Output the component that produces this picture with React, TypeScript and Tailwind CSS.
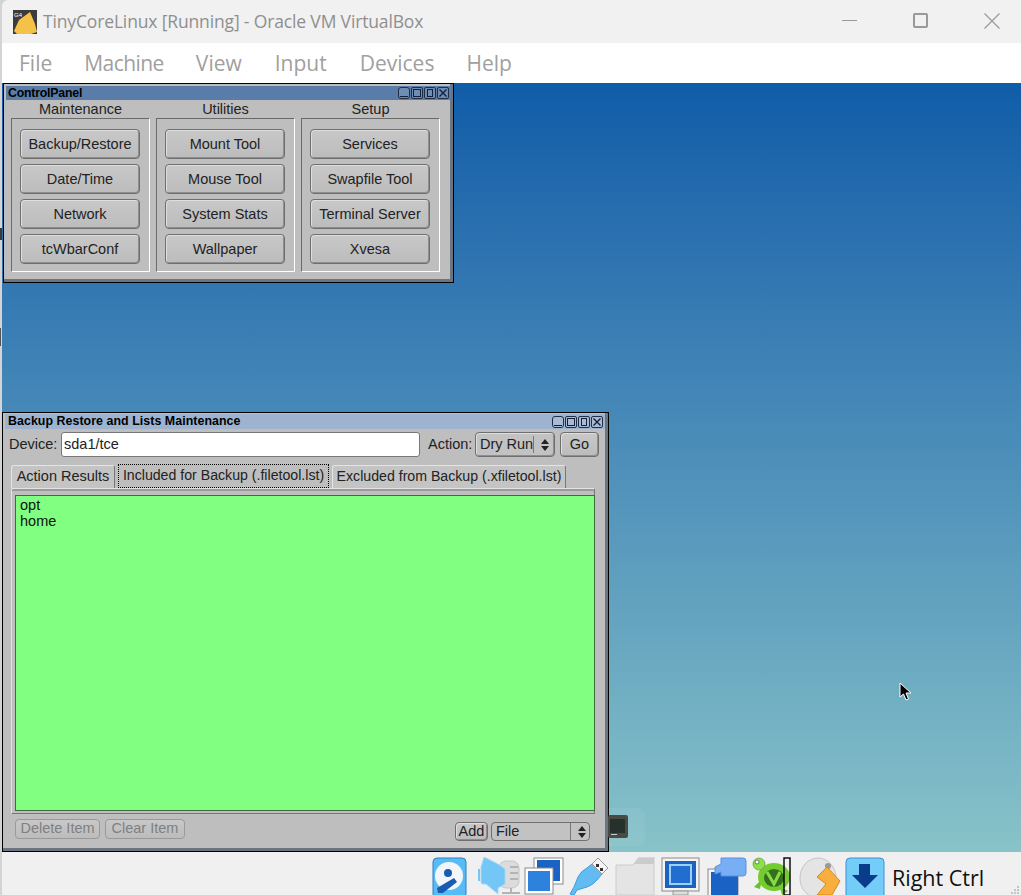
const fltk = "font-['Liberation_Sans',sans-serif]";

function FltkButton({ label, className = "" }: { label: string; className?: string }) {
  return (
    <div
      className={`flex items-center justify-center rounded-[4px] border border-[#6f6f6f] bg-gradient-to-b from-[#c8c8c8] to-[#bcbcbc] text-[#222] shadow-[inset_1px_1px_0_#dedede,inset_-1px_-1px_0_#8e8e8e] ${className}`}
    >
      {label}
    </div>
  );
}

function WinButtons({ light }: { light?: boolean }) {
  const c = light ? "bg-[#a9bbd3]" : "bg-[#6f8db3]";
  return (
    <div className="flex gap-[1px] text-[#14203a]">
      <div className={`flex h-[12px] w-[12px] items-end justify-center rounded-[3px] border border-[#1f2d45] pb-[1px] ${c}`}>
        <div className="h-[1px] w-[8px] bg-[#14203a]" />
      </div>
      <div className={`flex h-[12px] w-[12px] items-center justify-center rounded-[2px] border border-[#1f2d45] ${c}`}>
        <div className="h-[8px] w-[8px] border border-[#14203a]" />
      </div>
      <div className={`flex h-[12px] w-[12px] items-center justify-center rounded-[2px] border border-[#1f2d45] ${c}`}>
        <div className="h-[8px] w-[6px] border border-[#14203a]" />
      </div>
      <div className={`flex h-[12px] w-[12px] items-center justify-center rounded-[2px] border border-[#1f2d45] ${c}`}>
        <svg width="8" height="8" viewBox="0 0 8 8">
          <path d="M0.5 0.5 7.5 7.5M7.5 0.5 0.5 7.5" stroke="#14203a" strokeWidth="1.4" />
        </svg>
      </div>
    </div>
  );
}

function UpDown() {
  return (
    <svg width="8" height="12" viewBox="0 0 8 12">
      <path d="M4 0 8 5H0Z M4 12 0 7H8Z" fill="#222" />
    </svg>
  );
}

const panelGroups = [
  { title: "Maintenance", items: ["Backup/Restore", "Date/Time", "Network", "tcWbarConf"] },
  { title: "Utilities", items: ["Mount Tool", "Mouse Tool", "System Stats", "Wallpaper"] },
  { title: "Setup", items: ["Services", "Swapfile Tool", "Terminal Server", "Xvesa"] },
];

function ControlPanel() {
  return (
    <div className={`absolute left-[1px] top-0 h-[200px] w-[451px] border border-black bg-[#bebebe] pl-[2px] pt-[2px] shadow-[inset_-3px_-3px_0_#6c7480] ${fltk}`}>
      <div className="flex h-[14px] w-[445px] items-center justify-between bg-[#5a7ca8] pl-[2px] pr-[2px]">
        <span className="text-[12.3px] font-bold tracking-[-0.2px] text-black">ControlPanel</span>
        <WinButtons />
      </div>
      <div className="ml-[5px] flex w-[429px] gap-[6px]">
        {panelGroups.map((g) => (
          <div key={g.title} className="w-[139px]">
            <div className="flex h-[18px] items-center justify-center pt-[2px] text-[14.5px] text-[#222]">{g.title}</div>
            <div className="flex h-[154px] flex-col gap-[5px] border border-t-[#6a6a6a] border-l-[#6a6a6a] border-r-white border-b-white pl-[8px] pt-[10px]">
              {g.items.map((item) => (
                <FltkButton key={item} label={item} className="h-[30px] w-[120px] pt-[1px] text-[14.5px]" />
              ))}
            </div>
          </div>
        ))}
      </div>
    </div>
  );
}

function BackupWindow() {
  return (
    <div className={`absolute left-0 top-[329px] h-[440px] w-[607px] border border-black bg-[#bebebe] pl-[2px] pt-[1px] shadow-[inset_-3px_-3px_0_#6c7480] ${fltk}`}>
      <div className="flex h-[15px] w-[600px] items-center justify-between bg-[#9db3d0] pl-[3px] pr-[2px]">
        <span className="text-[12.4px] font-bold tracking-[0.05px] text-black">Backup Restore and Lists Maintenance</span>
        <WinButtons light />
      </div>
      <div className="mt-[3px] flex h-[25px] items-center text-[14.5px] text-[#222]">
        <span className="ml-[4px] w-[52px]">Device:</span>
        <div className="flex h-[25px] w-[359px] items-center rounded-[3px] border border-[#777] bg-white pl-[2px]">sda1/tce</div>
        <span className="ml-[8px] w-[47px]">Action:</span>
        <div className="flex h-[25px] w-[80px] items-center rounded-[4px] border border-[#6f6f6f] bg-[#c2c2c2] pl-[4px] shadow-[inset_1px_1px_0_#dedede,inset_-1px_-1px_0_#8e8e8e]">
          <span className="w-[53px] whitespace-nowrap">Dry Run</span>
          <div className="h-[17px] w-[1px] bg-[#777]" />
          <div className="ml-[7px] flex items-center"><UpDown /></div>
        </div>
        <FltkButton label="Go" className="ml-[5px] h-[25px] w-[39px]" />
      </div>
      <div className="ml-[6px] mt-[7px] flex h-[24px] w-[584px] items-end gap-[3px] text-[14.15px] text-[#222]">
        <div className="flex h-[23px] w-[104px] items-center justify-center rounded-t-[3px] border-r border-t border-l border-r-[#777] border-t-[#e4e4e4] border-l-[#e4e4e4] bg-[#c4c4c4] text-[14.5px]">Action Results</div>
        <div className="flex h-[24px] w-[211px] items-center justify-center border border-dotted border-black bg-[#bebebe]">Included for Backup (.filetool.lst)</div>
        <div className="flex h-[23px] w-[234px] items-center justify-center rounded-t-[3px] border-r border-t border-l border-r-[#777] border-t-[#e4e4e4] border-l-[#e4e4e4] bg-[#c4c4c4]">Excluded from Backup (.xfiletool.lst)</div>
      </div>
      <div className="ml-[6px] h-[326px] w-[584px] rounded-t-[2px] border-t border-l border-r border-b border-t-[#e4e4e4] border-l-[#e4e4e4] border-r-[#777] border-b-[#777] pl-[3px] pt-[6px] shadow-[inset_0_2px_0_#9a9a9a]">
        <div className="h-[316px] w-[580px] border border-[#3f6b3f] bg-[#80ff80] pl-[4px] pt-[1px] text-[14.5px] leading-[16px] text-[#111]">
          <div>opt</div>
          <div>home</div>
        </div>
      </div>
      <div className="ml-[10px] mt-[5px] flex h-[22px] w-[575px] items-start text-[14.5px]">
        <FltkButton label="Delete Item" className="h-[20px] w-[85px] !border-[#999] !text-[#808080] !shadow-none" />
        <FltkButton label="Clear Item" className="ml-[5px] h-[20px] w-[80px] !border-[#999] !text-[#808080] !shadow-none" />
        <FltkButton label="Add" className="ml-auto mt-[3px] h-[19px] w-[33px]" />
        <div className="ml-[3px] mt-[3px] flex h-[19px] w-[99px] items-center rounded-[4px] border border-[#6f6f6f] bg-[#c2c2c2] pl-[4px] text-[#222]">
          <span className="w-[74px]">File</span>
          <div className="h-[17px] w-[1px] bg-[#777]" />
          <div className="ml-[7px] flex items-center"><UpDown /></div>
        </div>
      </div>
    </div>
  );
}

function HdIcon() {
  return (
    <svg width="36" height="38" viewBox="0 0 36 38">
      <rect x="1" y="1" width="33" height="40" rx="4" fill="#58bcf4" stroke="#2a80c8" />
      <circle cx="17" cy="19" r="14" fill="#f2f6fa" />
      <circle cx="16" cy="16" r="4" fill="#1a5cb0" />
      <path d="M5 31 22 21l3 4-14 11H6Z" fill="#1a5cb0" />
    </svg>
  );
}

function SoundIcon() {
  return (
    <svg width="46" height="38" viewBox="0 0 46 38">
      <rect x="21" y="4" width="20" height="27" rx="7" fill="#dcdcdc" stroke="#c4c4c4" />
      <path d="M32 10h8M32 16h8M32 22h8M24 36h18M33 31v5" stroke="#b4b4b4" strokeWidth="2" />
      <path d="M3 10V25L4 27 H8L20 37 V31 L27 27V12L20 7 6 0Z" fill="#74c6f6" stroke="#a4d8f6" />
      <path d="M1 12V24" stroke="#74c6f6" strokeWidth="2" />
    </svg>
  );
}

function NetIcon() {
  return (
    <svg width="40" height="38" viewBox="0 0 40 38">
      <rect x="10" y="1" width="29" height="26" fill="#fff" stroke="#8a8a8a" />
      <rect x="13" y="3" width="23" height="21" fill="#1a62c4" />
      <rect x="1" y="11" width="28" height="26" fill="#fff" stroke="#8a8a8a" />
      <rect x="4" y="14" width="22" height="20" fill="#2c82dc" />
    </svg>
  );
}

function UsbIcon() {
  return (
    <svg width="40" height="38" viewBox="0 0 40 38">
      <path d="M1 37 5 30 9 20Q12 14 18 11L23 7 33 17 28 23Q24 28 18 30L8 33 5 38Z" fill="#62bcf2" stroke="#3f9cdc" />
      <path d="M23 7 29 1 39 11 33 17Z" fill="#f4f4f4" stroke="#999" />
      <rect x="27" y="7" width="3" height="3" fill="#333" />
      <rect x="31" y="11" width="3" height="3" fill="#333" />
    </svg>
  );
}

function FolderIcon() {
  return (
    <svg width="40" height="38" viewBox="0 0 40 38">
      <path d="M1 8H18L24 0H39V38H1Z" fill="#e4e4e4" stroke="#cccccc" />
      <path d="M24 1H39V7H19Z" fill="#cbcbcb" />
    </svg>
  );
}

function ScreenIcon() {
  return (
    <svg width="40" height="38" viewBox="0 0 40 38">
      <rect x="1" y="1" width="37" height="33" fill="#f4f4f4" stroke="#8a8a8a" />
      <rect x="4" y="4" width="31" height="27" fill="#1a62c4" />
      <rect x="9" y="8" width="21" height="19" fill="#1f6ed0" stroke="#9cd0f6" strokeWidth="2" />
      <rect x="12" y="34" width="15" height="4" fill="#ddd" stroke="#999" />
    </svg>
  );
}

function CaptureIcon() {
  return (
    <svg width="40" height="38" viewBox="0 0 40 38">
      <rect x="1" y="12" width="30" height="27" fill="#f4f4f4" stroke="#8a8a8a" />
      <rect x="4" y="15" width="27" height="24" fill="#1a62c4" />
      <path d="M8 10 14 7V1H36Q39 1 39 4V16Q39 19 36 19H14V15L8 17Z" fill="#78aef4" stroke="#5a90e0" />
    </svg>
  );
}

function TurtleIcon() {
  return (
    <svg width="40" height="38" viewBox="0 0 40 38">
      <path d="M2 30 10 22 8 32Z M28 30 36 34 30 38Z" fill="#6cc02c" />
      <ellipse cx="22" cy="20" rx="16" ry="14" fill="#74cc30" />
      <ellipse cx="7" cy="7" rx="6" ry="6" fill="#8ee04a" stroke="#5aa030" strokeWidth="0.7" />
      <circle cx="5" cy="5" r="2" fill="#fff" stroke="#333" strokeWidth="0.6" />
      <ellipse cx="22" cy="21" rx="10" ry="9" fill="#34701a" />
      <path d="M15 15 22 27 28 15" fill="none" stroke="#8ada48" strokeWidth="3" />
      <rect x="32" y="1" width="6" height="37" fill="none" stroke="#000" strokeWidth="1.4" />
    </svg>
  );
}

function MouseIcon() {
  return (
    <svg width="42" height="38" viewBox="0 0 42 38">
      <ellipse cx="19" cy="21" rx="18" ry="20" fill="#e4e4e4" stroke="#c4c4c4" />
      <circle cx="29" cy="9" r="3" fill="#999" />
      <path d="M28 10 41 24 33 38H18L27 27 18 20Z" fill="#f8ae3c" stroke="#d88820" />
    </svg>
  );
}

function ArrowIcon() {
  return (
    <svg width="40" height="38" viewBox="0 0 40 38">
      <rect x="1" y="1" width="38" height="42" rx="4" fill="#74ccf8" stroke="#3a92d4" />
      <path d="M14 7H25V18H33L20 31 7 18H14Z" fill="#0a3c8c" />
    </svg>
  );
}

export default function App() {
  return (
    <div className="relative h-[895px] w-[1021px] overflow-hidden bg-[#d4d4d4]">
      <div className="absolute left-0 top-[228px] h-[12px] w-[2px] bg-[#3a3a3a]" />
      <div className="absolute left-0 top-[328px] h-[18px] w-[1px] bg-[#555]" />
      <div className="ml-[2px] flex h-[895px] flex-col font-['Open_Sans',sans-serif]">
        <div className="flex h-[43px] shrink-0 items-center rounded-tl-[6px] bg-[#f1f1f1] pl-[11px]">
          <svg width="24" height="24" viewBox="0 0 24 24">
            <rect width="24" height="24" fill="#3c3c3c" />
            <path d="M1 21 6 10 17 2 22 14 24 22 18 24H4Z" fill="#f4c248" />
            <text x="1" y="7" fontSize="6" fill="#fff" fontFamily="Liberation Sans">G4</text>
          </svg>
          <span className="ml-[6px] text-[17.5px] tracking-[-0.15px] text-[#8f8f8f]">TinyCoreLinux [Running] - Oracle VM VirtualBox</span>
          <div className="ml-auto flex items-center pb-[2px] pr-[21px]">
            <div className="mr-[56px] h-[1px] w-[15px] bg-[#999]" />
            <div className="mr-[56px] h-[15px] w-[15px] rounded-[2px] border-2 border-[#999]" />
            <svg width="16" height="16" viewBox="0 0 16 16">
              <path d="M0.5 0.5 15.5 15.5M15.5 0.5 0.5 15.5" stroke="#999" strokeWidth="1.2" />
            </svg>
          </div>
        </div>
        <div className="flex h-[40px] shrink-0 items-center bg-white pl-[17px] pt-[1px] text-[21px] text-[#a0a0a0]">
          <span>File</span>
          <span className="ml-[32px] tracking-[-0.55px]">Machine</span>
          <span className="ml-[32px]">View</span>
          <span className="ml-[33px]">Input</span>
          <span className="ml-[33px]">Devices</span>
          <span className="ml-[32px]">Help</span>
        </div>
        <div className="relative min-h-0 flex-1 bg-gradient-to-b from-[#0f5ca8] to-[#88c3c8]">
          <ControlPanel />
          <BackupWindow />
          <div className="absolute left-[606px] top-[725px] flex h-[38px] w-[37px] items-center rounded-r-[8px] bg-white/5">
            <svg width="20" height="24" viewBox="0 0 20 24">
              <rect x="0" y="0" width="20" height="23" rx="2" fill="#4a4a44" />
              <rect x="2" y="4" width="15" height="14" fill="#26302c" />
              <rect x="3" y="19" width="6" height="1" fill="#c8c8c8" />
            </svg>
          </div>
          <svg className="absolute left-[897px] top-[599px]" width="14" height="19" viewBox="0 0 14 19">
            <path d="M1 1V15L4.5 12 7 18 9.5 17 7 11H12Z" fill="#000" stroke="#fff" />
          </svg>
        </div>
        <div className="relative flex h-[43px] shrink-0 items-end bg-[#f0f0f0] pl-[430px]">
          <div className="flex h-[38px] items-start overflow-hidden">
            <HdIcon />
            <div className="ml-[10px]"><SoundIcon /></div>
            <NetIcon />
            <div className="ml-[5px]"><UsbIcon /></div>
            <div className="ml-[6px]"><FolderIcon /></div>
            <div className="ml-[6px]"><ScreenIcon /></div>
            <div className="ml-[6px]"><CaptureIcon /></div>
            <div className="ml-[5px]"><TurtleIcon /></div>
            <div className="ml-[7px]"><MouseIcon /></div>
            <div className="ml-[4px]"><ArrowIcon /></div>
          </div>
          <span className="ml-[7px] text-[21.5px] leading-[34px] text-[#111]">Right Ctrl</span>
          <svg className="absolute bottom-0 right-[1px]" width="9" height="9" viewBox="0 0 9 9">
            <path d="M6 0h2v2H6ZM3 3h2v2H3ZM6 3h2v2H6ZM0 6h2v2H0ZM3 6h2v2H3ZM6 6h2v2H6Z" fill="#c4c4c4" />
          </svg>
        </div>
      </div>
    </div>
  );
}
